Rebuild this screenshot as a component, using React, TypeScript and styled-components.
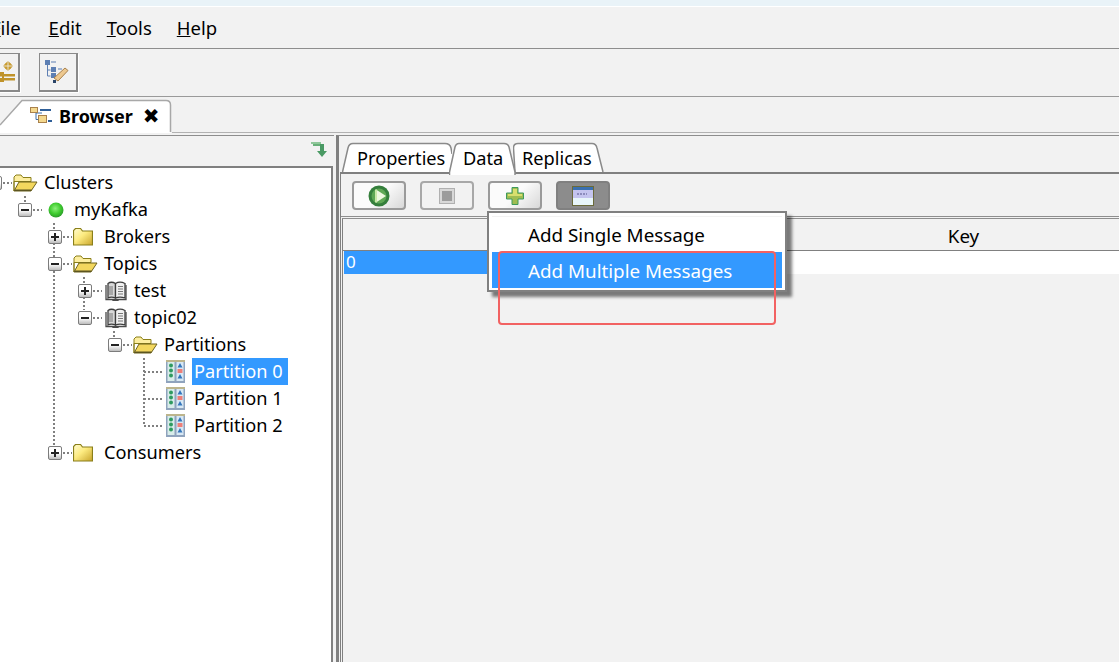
import React from "react";
import styled, { createGlobalStyle } from "styled-components";

const GlobalStyle = createGlobalStyle`
  html, body {
    margin: 0;
    padding: 0;
    background: #f2f2f2;
  }
  body {
    font-family: "Noto Sans", "Open Sans", sans-serif;
    font-size: 18px;
    color: #000;
  }
`;

function FolderClosed() {
  return (
    <svg width="20" height="18" viewBox="0 0 20 18">
      <defs>
        <linearGradient id="fc" x1="0" y1="0" x2="1" y2="1">
          <stop offset="0" stopColor="#fffbd0" />
          <stop offset="0.45" stopColor="#fdeb80" />
          <stop offset="1" stopColor="#c9a52c" />
        </linearGradient>
      </defs>
      <path d="M.5 4.500V2.500L2.500.5h5l2 2.500h10v14H.5z" fill="url(#fc)" stroke="#8a7f1a" strokeWidth="1.200" />
    </svg>
  );
}

function FolderOpen() {
  return (
    <svg width="25" height="18" viewBox="0 0 25 18">
      <path d="M1 17V3l2-2h5l2 2.500h8v4H1z" fill="#fdeea0" stroke="#8a7f1a" />
      <path d="M1 17l5-9h18l-6 9z" fill="#f3d75e" stroke="#6e6420" />
      <path d="M1 17h17l.8-1.500H2z" fill="#5c5520" />
    </svg>
  );
}

function BookIcon() {
  return (
    <svg width="22" height="20" viewBox="0 0 22 20">
      <path d="M3 2.500C5 1 8 1 10.500 2.500V17C8 16 5 16 3 17z" fill="#d8d8d8" stroke="#3c3c3c" strokeWidth="1.300" />
      <path d="M10.500 2.500C13 1 17 1 20 2.500V17c-3-1-7-1-9.500 0z" fill="#f0f0f0" stroke="#3c3c3c" strokeWidth="1.300" />
      <path d="M1 4v14.500h20V4M8 18.500h5v1H8z" fill="none" stroke="#4a4a4a" strokeWidth="1.300" />
      <path d="M13 5.500h5M13 8h5M13 10.500h5M13 13h5" stroke="#777" />
      <path d="M5 5v9M7 5v9" stroke="#777" />
    </svg>
  );
}

function PartitionIcon() {
  const green = [5, 10, 15];
  return (
    <svg width="19" height="23" viewBox="0 0 19 23">
      <rect x="0" y="0" width="19" height="2" fill="#bdb58c" />
      <rect x="0" y="2" width="19" height="21" fill="#8fa3bd" />
      <rect x="1.500" y="2" width="7" height="19" fill="#d8ecea" />
      <rect x="10.500" y="2" width="7" height="19" fill="#d8e8f4" />
      {green.map((y) => (
        <circle key={y} cx="5" cy={y + 0.5} r="2" fill="#2f9a60" />
      ))}
      <path d="M14 3l2.500 4.500h-5zM14 14l2.500 4.500h-5z" fill="#3476bc" />
      <rect x="11.500" y="9" width="5" height="4" fill="#ee7f78" />
    </svg>
  );
}

function StatusBall() {
  return (
    <svg width="16" height="16" viewBox="0 0 16 16">
      <defs>
        <radialGradient id="ball" cx="0.45" cy="0.4" r="0.6">
          <stop offset="0" stopColor="#8cf07a" />
          <stop offset="0.6" stopColor="#3fcc2f" />
          <stop offset="1" stopColor="#2c9c2a" />
        </radialGradient>
      </defs>
      <circle cx="8" cy="8" r="7.500" fill="url(#ball)" />
    </svg>
  );
}

function PlayIcon() {
  return (
    <svg width="22" height="22" viewBox="0 0 22 22">
      <circle cx="11" cy="11" r="10.500" fill="#357f3c" />
      <circle cx="11" cy="11" r="7.500" fill="#5fa855" />
      <path d="M8 4.500L18 11 8 17.500z" fill="#eef8e0" />
      <path d="M8 4.500v13" stroke="#c9e8a8" strokeWidth="2" />
    </svg>
  );
}

function StopIcon() {
  return (
    <svg width="16" height="16" viewBox="0 0 16 16">
      <rect x=".5" y=".5" width="15" height="15" fill="#d8d8d8" stroke="#b0b0b0" />
      <rect x="3" y="3" width="10" height="10" fill="#9c9c9c" />
    </svg>
  );
}

function PlusIcon() {
  return (
    <svg width="18" height="18" viewBox="0 0 18 18">
      <path d="M6 .5h6v5.500h5.500v6H12v5.500H6V12H.5V6H6z" fill="#9fbd52" stroke="#3f9a5c" />
      <path d="M7 2h4v5h5v2H11v0H7V9H2V7h5z" fill="#d8df6e" />
    </svg>
  );
}

function DialogIcon() {
  return (
    <svg width="22" height="20" viewBox="0 0 22 20">
      <rect x=".5" y=".5" width="21" height="19" fill="#e8f6fa" stroke="#6a6a3a" />
      <rect x="1" y="1" width="20" height="3" fill="#3a70b0" />
      <rect x="1" y="4" width="20" height="8" fill="#c4c4ee" />
      <path d="M5 8h10" stroke="#55558a" strokeDasharray="2 1" />
    </svg>
  );
}

function ConnectIcon() {
  return (
    <svg width="30" height="24" viewBox="0 0 30 24">
      <path d="M23 1l5 5-5 5-5-5z" fill="#c0932a" />
      <circle cx="23" cy="6" r="3.500" fill="#c99c30" />
      <path d="M23 0v12M17 6h12" stroke="#f2f2f2" strokeWidth=".8" />
      <rect x="13" y="14" width="17" height="2.500" fill="#c0932a" />
      <rect x="13" y="18" width="17" height="2.500" fill="#c0932a" />
      <rect x="12" y="13" width="6" height="8" fill="none" stroke="#c0932a" strokeWidth="2" />
    </svg>
  );
}

function TreeEditIcon() {
  return (
    <svg width="26" height="24" viewBox="0 0 26 24">
      <rect x="0" y="0" width="5" height="5" fill="#5d7fb3" />
      <path d="M6 2h5M2.500 5v11h3M2.500 10h3" stroke="#5d7fb3" fill="none" />
      <rect x="6" y="7" width="5" height="5" fill="#5d7fb3" />
      <rect x="6" y="13" width="5" height="5" fill="#5d7fb3" />
      <path d="M13 9h4" stroke="#5d7fb3" />
      <path d="M9 18L20 8l3 2.500L13 21z" fill="#edc88f" stroke="#a9814c" />
      <rect x="8" y="20" width="3" height="3" fill="#2a4468" />
    </svg>
  );
}

function BrowserIcon() {
  return (
    <svg width="23" height="17" viewBox="0 0 23 17">
      <path d="M6 3.500v9h6M6 6h6" stroke="#3f6fa8" fill="none" />
      <rect x=".5" y=".5" width="7" height="5" fill="#f4d88e" stroke="#a9814c" />
      <rect x="8.500" y="8.500" width="8" height="7" fill="#f4d88e" stroke="#a9814c" />
      <path d="M10 3h11M18 14h4" stroke="#2f5f98" strokeWidth="2" />
    </svg>
  );
}

function CollapseArrow() {
  return (
    <svg width="17" height="15" viewBox="0 0 17 15">
      <path d="M0 1h10" stroke="#8fc79a" strokeWidth="2" />
      <path d="M2 3h9" stroke="#69b07a" strokeWidth="2" />
      <path d="M9 2h4v7h3l-5 6-5-6h3z" fill="#4a9a64" />
    </svg>
  );
}

const Screen = styled.div`
  position: relative;
  display: flex;
  flex-direction: column;
  width: 1119px;
  height: 662px;
  overflow: hidden;
  background: #f2f2f2;
`;

const TitleStrip = styled.div`
  height: 6px;
  flex: none;
  background: #e9f3f8;
  border-bottom: 1px solid #fff;
`;

const MenuBar = styled.div`
  display: flex;
  align-items: center;
  flex: none;
  height: 41px;
  margin-left: -9px;
  border-bottom: 1px solid #8e8e8e;
`;

const MenuItem = styled.span<{ $gap: number }>`
  font-size: 18.5px;
  margin-right: ${(p) => p.$gap}px;
`;

const ToolBar = styled.div`
  display: flex;
  align-items: center;
  gap: 19px;
  flex: none;
  height: 47px;
  margin-left: -19px;
  border-bottom: 1px solid #9a9a9a;
`;

const ToolButton = styled.div`
  display: flex;
  align-items: center;
  justify-content: center;
  width: 39px;
  height: 39px;
  box-sizing: border-box;
  border-top: 1px solid #8a8a8a;
  border-left: 1px solid #8a8a8a;
  border-right: 2px solid #8a8a8a;
  border-bottom: 2px solid #8a8a8a;
  box-shadow: 1px 1px 0 #fff;
`;

const PerspectiveStrip = styled.div`
  display: flex;
  flex: none;
  height: 36px;
`;

const PerspectiveTab = styled.div`
  position: relative;
  z-index: 1;
  display: flex;
  align-items: center;
  flex: none;
  width: 172px;
  height: 38px;
  padding: 2px 0 3px 30px;
  box-sizing: border-box;
  font-weight: 700;
  font-size: 18px;
`;

const TabShape = styled.svg`
  position: absolute;
  left: 0;
  top: 0;
  z-index: -1;
`;

const TabTitle = styled.span`
  margin-left: 6px;
`;

const CloseMark = styled.span`
  margin-left: 10px;
  font-size: 20px;
  line-height: 1;
  font-family: "DejaVu Sans", sans-serif;
`;

const StripFill = styled.div`
  flex: 1;
  height: 35px;
  border-bottom: 1px solid #b2b2b2;
  box-sizing: content-box;
`;

const Workspace = styled.div`
  display: flex;
  flex: 1;
  min-height: 0;
  padding-top: 2px;
`;

const NavigatorPanel = styled.div`
  display: flex;
  flex-direction: column;
  flex: none;
  width: 334px;
  border-top: 1px solid #8e8e8e;
`;

const NavigatorHeader = styled.div`
  display: flex;
  justify-content: flex-end;
  align-items: center;
  flex: none;
  height: 30px;
  padding: 0 6px 3px 0;
  box-sizing: border-box;
`;

const TreeBox = styled.div`
  position: relative;
  flex: 1;
  width: 333px;
  box-sizing: border-box;
  background: #fff;
  border-top: 2px solid #808080;
  border-right: 2px solid #808080;
  overflow: hidden;
`;

const TreeGuides = styled.svg`
  position: absolute;
  left: 0;
  top: 0;
`;

const TreeBody = styled.div`
  position: relative;
  margin-left: -12px;
  padding-top: 1px;
`;

const TreeRow = styled.div<{ $depth: number }>`
  display: flex;
  align-items: center;
  height: 27px;
  padding-left: ${(p) => p.$depth * 30}px;
`;

const Expander = styled.div<{ $open: boolean }>`
  position: relative;
  flex: none;
  width: 14px;
  height: 14px;
  box-sizing: border-box;
  border: 1px solid #7c7c7c;
  border-radius: 2px;
  background: linear-gradient(#fff, #fff 50%, #bdbdbd);
  &::before {
    content: "";
    position: absolute;
    left: 2px;
    right: 2px;
    top: 5px;
    height: 2px;
    background: #222;
  }
  &::after {
    content: "";
    display: ${(p) => (p.$open ? "none" : "block")};
    position: absolute;
    top: 2px;
    bottom: 2px;
    left: 5px;
    width: 2px;
    background: #222;
  }
`;

const BranchDots = styled.div`
  flex: none;
  width: 9px;
  height: 2px;
  margin: 0 1px;
  background: repeating-linear-gradient(90deg, #808080 0 2px, transparent 2px 4px);
`;

const LeafBranch = styled.div`
  flex: none;
  width: 18px;
  height: 2px;
  margin: 0 1px 0 6px;
  background: repeating-linear-gradient(90deg, #808080 0 2px, transparent 2px 4px);
`;

const IconSlot = styled.div<{ $start?: boolean }>`
  display: flex;
  align-items: center;
  justify-content: ${(p) => (p.$start ? "flex-start" : "center")};
  flex: none;
  width: 25px;
  height: 24px;
`;

const NodeLabel = styled.span<{ $selected?: boolean }>`
  display: block;
  height: 27px;
  line-height: 27px;
  margin-left: 4px;
  padding: 0 5px 0 2px;
  font-size: 18.2px;
  white-space: nowrap;
  color: ${(p) => (p.$selected ? "#fff" : "#000")};
  background: ${(p) => (p.$selected ? "#3399ff" : "transparent")};
`;

const EditorArea = styled.div`
  display: flex;
  flex-direction: column;
  flex: 1;
  min-width: 0;
  margin-left: 2px;
  padding-left: 1px;
  border-left: 3px solid #808080;
  border-top: 1px solid #8e8e8e;
`;

const EditorTabs = styled.div`
  display: flex;
  flex: none;
  height: 30px;
  margin-top: 6px;
  padding-left: 2px;
`;

const EditorTab = styled.div<{ $active?: boolean; $w: number; $pad: number }>`
  position: relative;
  z-index: ${(p) => (p.$active ? 1 : 0)};
  flex: none;
  width: ${(p) => p.$w}px;
  height: ${(p) => (p.$active ? 33 : 30)}px;
  margin-right: -3px;
  padding: 2px 0 0 ${(p) => p.$pad}px;
  box-sizing: border-box;
  font-size: 18.2px;
  line-height: 28px;
`;

const EditorPane = styled.div`
  display: flex;
  flex-direction: column;
  flex: 1;
  min-height: 0;
  border-top: 2px solid #808080;
  border-left: 1px solid #808080;
`;

const ActionBar = styled.div`
  display: flex;
  gap: 14px;
  flex: none;
  height: 43px;
  padding: 7px 0 0 11px;
  box-sizing: border-box;
  border-bottom: 1px solid #8e8e8e;
`;

const ActionButton = styled.div<{ $state?: "pressed" | "disabled" }>`
  display: flex;
  align-items: center;
  justify-content: center;
  width: 54px;
  height: 29px;
  box-sizing: border-box;
  border: 2px solid ${(p) => (p.$state === "pressed" ? "#808080" : p.$state === "disabled" ? "#a8a8a8" : "#9a9a9a")};
  border-radius: 4px;
  background: ${(p) =>
    p.$state === "pressed"
      ? "#8c8c8c"
      : p.$state === "disabled"
        ? "#f2f2f2"
        : "linear-gradient(135deg, #fbfbfb 50%, #d8d8d8)"};
`;

const MessageTable = styled.div`
  flex: 1;
  margin: 1px 0 0 1px;
  border-left: 1px solid #808080;
  border-top: 1px solid #8e8e8e;
  padding-left: 1px;
`;

const TableHeader = styled.div`
  display: flex;
  justify-content: flex-end;
  align-items: center;
  height: 32px;
  padding-top: 3px;
  box-sizing: border-box;
  margin-left: -1px;
  border-bottom: 1px solid #808080;
`;

const HeaderCell = styled.div`
  width: 311px;
  text-align: center;
  font-size: 18.8px;
`;

const TableRow = styled.div`
  display: flex;
  height: 23px;
  background: #fff;
`;

const OffsetCell = styled.div`
  width: 300px;
  padding-left: 2px;
  box-sizing: border-box;
  background: #3399ff;
  color: #fff;
  font-size: 17px;
  line-height: 22px;
`;

const PopupMenu = styled.div`
  position: absolute;
  left: 487px;
  top: 211px;
  width: 300px;
  height: 81px;
  box-sizing: border-box;
  padding: 3px 3px 0;
  background: #fff;
  border: 2px solid #808080;
  box-shadow: 5px 5px 3px rgba(0, 0, 0, 0.5);
`;

const PopupItem = styled.div<{ $active?: boolean }>`
  height: 36px;
  padding: ${(p) => (p.$active ? "1px 0 0 36px" : "0 0 0 36px")};
  box-sizing: border-box;
  font-size: 18.8px;
  line-height: ${(p) => (p.$active ? 36 : 37)}px;
  color: ${(p) => (p.$active ? "#fff" : "#000")};
  background: ${(p) => (p.$active ? "#3399ff" : "transparent")};
  border-top: ${(p) => (p.$active ? "none" : "1px solid #f2f2f2")};
`;

const Annotation = styled.div`
  position: absolute;
  left: 498px;
  top: 251px;
  width: 278px;
  height: 74px;
  box-sizing: border-box;
  border: 2px solid #f26262;
  border-radius: 4px;
`;

type NodeKind = "open" | "closed" | "ball" | "book" | "partition";

interface TreeNode {
  label: string;
  depth: number;
  kind: NodeKind;
  expanded?: boolean;
  leaf?: boolean;
  selected?: boolean;
}

const nodes: TreeNode[] = [
  { label: "Clusters", depth: 0, kind: "open", expanded: true },
  { label: "myKafka", depth: 1, kind: "ball", expanded: true },
  { label: "Brokers", depth: 2, kind: "closed", expanded: false },
  { label: "Topics", depth: 2, kind: "open", expanded: true },
  { label: "test", depth: 3, kind: "book", expanded: false },
  { label: "topic02", depth: 3, kind: "book", expanded: true },
  { label: "Partitions", depth: 4, kind: "open", expanded: true },
  { label: "Partition 0", depth: 5, kind: "partition", leaf: true, selected: true },
  { label: "Partition 1", depth: 5, kind: "partition", leaf: true },
  { label: "Partition 2", depth: 5, kind: "partition", leaf: true },
  { label: "Consumers", depth: 2, kind: "closed", expanded: false },
];

function NodeIcon({ kind }: { kind: NodeKind }) {
  if (kind === "open") return <FolderOpen />;
  if (kind === "closed") return <FolderClosed />;
  if (kind === "ball") return <StatusBall />;
  if (kind === "book") return <BookIcon />;
  return <PartitionIcon />;
}

const tabPaths: Record<string, string> = {
  Properties: "M.5 30L6 6Q7 1.500 11 1.500H103Q108 1.500 109 6L110 12",
  Data: "M.5 33V30L6 5Q7 1.500 10 1.500H55Q59 1.500 60 5L66 30V33",
  Replicas: "M2 30L.5 6Q.5 1.500 5 1.500H79Q83 1.500 84 6L90 30",
};

function TabOutline({ name, w, h }: { name: string; w: number; h: number }) {
  return (
    <TabShape width={w} height={h} viewBox={`0 0 ${w} ${h}`}>
      <path d={`${tabPaths[name]}V${h}H.5Z`} fill="#fff" stroke="none" />
      <path d={tabPaths[name]} fill="none" stroke="#8a8a8a" strokeWidth="1.500" />
    </TabShape>
  );
}

export default function App() {
  return (
    <Screen>
      <GlobalStyle />
      <TitleStrip />
      <MenuBar>
        <MenuItem $gap={28}>
          <u>F</u>ile
        </MenuItem>
        <MenuItem $gap={25}>
          <u>E</u>dit
        </MenuItem>
        <MenuItem $gap={25}>
          <u>T</u>ools
        </MenuItem>
        <MenuItem $gap={0}>
          <u>H</u>elp
        </MenuItem>
      </MenuBar>
      <ToolBar>
        <ToolButton>
          <ConnectIcon />
        </ToolButton>
        <ToolButton>
          <TreeEditIcon />
        </ToolButton>
      </ToolBar>
      <PerspectiveStrip>
        <PerspectiveTab>
          <TabShape width="172" height="38" viewBox="0 0 172 38">
            <path d="M0 28L22 4H166Q170 4 170.500 8V36H0Z" fill="#fff" />
            <path d="M0 28L22 3.500H166Q170.500 3.500 170.500 8V35" fill="none" stroke="#a8a8a8" strokeWidth="1.500" />
          </TabShape>
          <BrowserIcon />
          <TabTitle>Browser</TabTitle>
          <CloseMark>✖</CloseMark>
        </PerspectiveTab>
        <StripFill />
      </PerspectiveStrip>
      <Workspace>
        <NavigatorPanel>
          <NavigatorHeader>
            <CollapseArrow />
          </NavigatorHeader>
          <TreeBox>
            <TreeGuides width="331" height="300" viewBox="0 0 331 300">
              <g stroke="#808080" strokeWidth="2" strokeDasharray="2 2" fill="none">
                <path d="M25 28V34" />
                <path d="M54 55V278" />
                <path d="M84 109V142" />
                <path d="M114 163V170" />
                <path d="M144 190V257" />
              </g>
            </TreeGuides>
            <TreeBody>
              {nodes.map((n) => (
                <TreeRow key={n.label} $depth={n.depth}>
                  {n.leaf ? (
                    <LeafBranch />
                  ) : (
                    <>
                      <Expander $open={!!n.expanded} />
                      <BranchDots />
                    </>
                  )}
                  <IconSlot $start={n.kind === "closed" || n.kind === "open"}>
                    <NodeIcon kind={n.kind} />
                  </IconSlot>
                  <NodeLabel $selected={n.selected}>{n.label}</NodeLabel>
                </TreeRow>
              ))}
            </TreeBody>
          </TreeBox>
        </NavigatorPanel>
        <EditorArea>
          <EditorTabs>
            <EditorTab $w={110} $pad={15}>
              <TabOutline name="Properties" w={110} h={30} />
              Properties
            </EditorTab>
            <EditorTab $active $w={67} $pad={14}>
              <TabOutline name="Data" w={67} h={33} />
              Data
            </EditorTab>
            <EditorTab $w={92} $pad={9}>
              <TabOutline name="Replicas" w={92} h={30} />
              Replicas
            </EditorTab>
          </EditorTabs>
          <EditorPane>
            <ActionBar>
              <ActionButton>
                <PlayIcon />
              </ActionButton>
              <ActionButton $state="disabled">
                <StopIcon />
              </ActionButton>
              <ActionButton>
                <PlusIcon />
              </ActionButton>
              <ActionButton $state="pressed">
                <DialogIcon />
              </ActionButton>
            </ActionBar>
            <MessageTable>
              <TableHeader>
                <HeaderCell>Key</HeaderCell>
              </TableHeader>
              <TableRow>
                <OffsetCell>0</OffsetCell>
              </TableRow>
            </MessageTable>
          </EditorPane>
        </EditorArea>
      </Workspace>
      <PopupMenu>
        <PopupItem>Add Single Message</PopupItem>
        <PopupItem $active>Add Multiple Messages</PopupItem>
      </PopupMenu>
      <Annotation />
    </Screen>
  );
}
